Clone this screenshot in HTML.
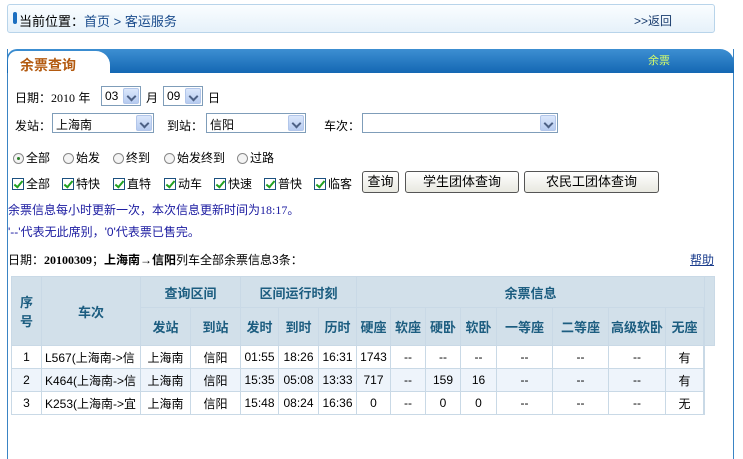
<!DOCTYPE html><html><head><meta charset="utf-8"><style>
*{margin:0;padding:0;box-sizing:border-box}
body{width:743px;height:459px;background:#fff;font-family:"Liberation Sans","Noto Sans CJK SC",sans-serif;font-size:12px;color:#000;position:relative;overflow:hidden}
.a{position:absolute;white-space:nowrap}
.crumb{left:7px;top:4px;width:708px;height:29px;border:1px solid #b8d4ea;border-radius:3px;background:linear-gradient(#fafdff,#e6f1fa)}
.sel{position:absolute;height:20px;border:1px solid #7f9db9;background:#fff;font-size:12px;padding:2px 3px}
.sel i{position:absolute;right:1px;top:1px;width:16px;height:16px;background:linear-gradient(#dbe7fb,#b6cbf0);border:1px solid #b2c6ea;border-radius:2px}
.sel i:after{content:"";position:absolute;left:4px;top:4px;width:5px;height:5px;border-right:2px solid #4d6185;border-bottom:2px solid #4d6185;transform:rotate(45deg)}
.rb{display:inline-block;width:11px;height:11px;border:1px solid #888;border-radius:50%;vertical-align:-2px;margin-right:2px;background:#f4f4f4;position:relative}
.cb{display:inline-block;width:12px;height:12px;border:1px solid #1c5180;vertical-align:-2px;margin-right:2px;position:relative;background:#fff}
.cb:after{content:"";position:absolute;left:3px;top:0px;width:3px;height:7px;border-right:2px solid #21a121;border-bottom:2px solid #21a121;transform:rotate(40deg)}
.btn{position:absolute;top:171px;height:22px;border:1px solid #555;border-radius:3px;background:linear-gradient(#fff,#e8e8e0);font-size:13px;text-align:center;line-height:20px}
table{position:absolute;left:11px;top:276px;border-collapse:collapse;font-size:12px}
td{border:1px solid #c9d9e6;text-align:center;padding:0;height:23px}
th{border:1px solid #c9d9e6;background:#d2e0ea;color:#1c5d80;font-weight:bold;font-size:13px;padding:0}
</style></head><body>
<div class="a crumb"></div>
<div class="a" style="left:13px;top:12px;width:4px;height:12px;background:#1d6fc0;border-radius:2px"></div>
<div class="a" style="left:19px;top:11px;font-size:13px">当前位置：<span style="color:#1a4b8c">首页 &gt; 客运服务</span></div>
<div class="a" style="left:634px;top:12px;color:#1a3c6e">&gt;&gt;返回</div>
<div class="a" style="left:7px;top:49px;width:727px;height:410px;border-left:1px solid #3a84c4;border-right:1px solid #3a84c4"></div>
<div class="a" style="left:7px;top:49px;width:727px;height:24px;background:linear-gradient(#3d8fd2,#1467b3);border-radius:10px 14px 0 0"></div>
<div class="a" style="left:8px;top:51px;width:102px;height:23px;background:#fff;border-radius:9px 14px 0 0"></div>
<div class="a" style="left:20px;top:55px;font-size:14px;font-weight:bold;color:#b35a10">余票查询</div>
<div class="a" style="left:648px;top:52px;font-size:11px;color:#d8ff6a">余票</div>
<div class="a" style="left:15px;top:89px">日期：<span style="font-family:'Liberation Serif',serif">2010</span> 年</div>
<div class="sel" style="left:101px;top:86px;width:40px">03<i></i></div>
<div class="a" style="left:146px;top:89px">月</div>
<div class="sel" style="left:163px;top:86px;width:40px">09<i></i></div>
<div class="a" style="left:208px;top:89px">日</div>
<div class="a" style="left:15px;top:117px">发站：</div>
<div class="sel" style="left:52px;top:113px;width:102px">上海南<i></i></div>
<div class="a" style="left:167px;top:117px">到站：</div>
<div class="sel" style="left:206px;top:113px;width:100px">信阳<i></i></div>
<div class="a" style="left:324px;top:117px">车次：</div>
<div class="sel" style="left:362px;top:113px;width:196px"><i></i></div>
<div class="a" style="left:13px;top:149px"><span class="rb"><span style="position:absolute;left:3px;top:3px;width:3px;height:3px;background:#2a7d2a;border-radius:50%"></span></span>全部</div>
<div class="a" style="left:63px;top:149px"><span class="rb"></span>始发</div>
<div class="a" style="left:113px;top:149px"><span class="rb"></span>终到</div>
<div class="a" style="left:164px;top:149px"><span class="rb"></span>始发终到</div>
<div class="a" style="left:237px;top:149px"><span class="rb"></span>过路</div>
<div class="a" style="left:12px;top:175px"><span class="cb"></span>全部</div>
<div class="a" style="left:62px;top:175px"><span class="cb"></span>特快</div>
<div class="a" style="left:113px;top:175px"><span class="cb"></span>直特</div>
<div class="a" style="left:164px;top:175px"><span class="cb"></span>动车</div>
<div class="a" style="left:214px;top:175px"><span class="cb"></span>快速</div>
<div class="a" style="left:264px;top:175px"><span class="cb"></span>普快</div>
<div class="a" style="left:314px;top:175px"><span class="cb"></span>临客</div>
<div class="btn" style="left:362px;width:37px">查询</div>
<div class="btn" style="left:405px;width:114px">学生团体查询</div>
<div class="btn" style="left:524px;width:135px">农民工团体查询</div>
<div class="a" style="left:8px;top:201px;color:#1a1aa0">余票信息每小时更新一次，本次信息更新时间为<span style="font-family:'Liberation Serif',serif">18:17</span>。</div>
<div class="a" style="left:8px;top:223px;color:#1a1aa0">'--'代表无此席别，'0'代表票已售完。</div>
<div class="a" style="left:8px;top:251px">日期：<b style="font-family:'Liberation Serif',serif">20100309</b>；<b>上海南→信阳</b>列车全部余票信息3条：</div>
<div class="a" style="left:690px;top:251px;color:#1a3c8c;text-decoration:underline">帮助</div>
<table>
<tr style="height:31px"><th rowspan="2" style="width:30px">序<br>号</th><th rowspan="2" style="width:99px">车次</th><th colspan="2">查询区间</th><th colspan="3">区间运行时刻</th><th colspan="9">余票信息</th><th rowspan="2" style="width:10px"></th></tr>
<tr style="height:38px"><th style="width:50px">发站</th><th style="width:50px">到站</th><th style="width:38px">发时</th><th style="width:40px">到时</th><th style="width:38px">历时</th><th style="width:34px">硬座</th><th style="width:35px">软座</th><th style="width:35px">硬卧</th><th style="width:36px">软卧</th><th style="width:56px">一等座</th><th style="width:56px">二等座</th><th style="width:57px">高级软卧</th><th style="width:38px">无座</th></tr>
<tr><td>1</td><td style="text-align:left;padding-left:3px">L567(上海南-&gt;信</td><td>上海南</td><td>信阳</td><td>01:55</td><td>18:26</td><td>16:31</td><td>1743</td><td>--</td><td>--</td><td>--</td><td>--</td><td>--</td><td>--</td><td>有</td><td></td></tr>
<tr style="background:#eef4fb"><td>2</td><td style="text-align:left;padding-left:3px">K464(上海南-&gt;信</td><td>上海南</td><td>信阳</td><td>15:35</td><td>05:08</td><td>13:33</td><td>717</td><td>--</td><td>159</td><td>16</td><td>--</td><td>--</td><td>--</td><td>有</td><td></td></tr>
<tr><td>3</td><td style="text-align:left;padding-left:3px">K253(上海南-&gt;宜</td><td>上海南</td><td>信阳</td><td>15:48</td><td>08:24</td><td>16:36</td><td>0</td><td>--</td><td>0</td><td>0</td><td>--</td><td>--</td><td>--</td><td>无</td><td></td></tr>
</table>
</body></html>
